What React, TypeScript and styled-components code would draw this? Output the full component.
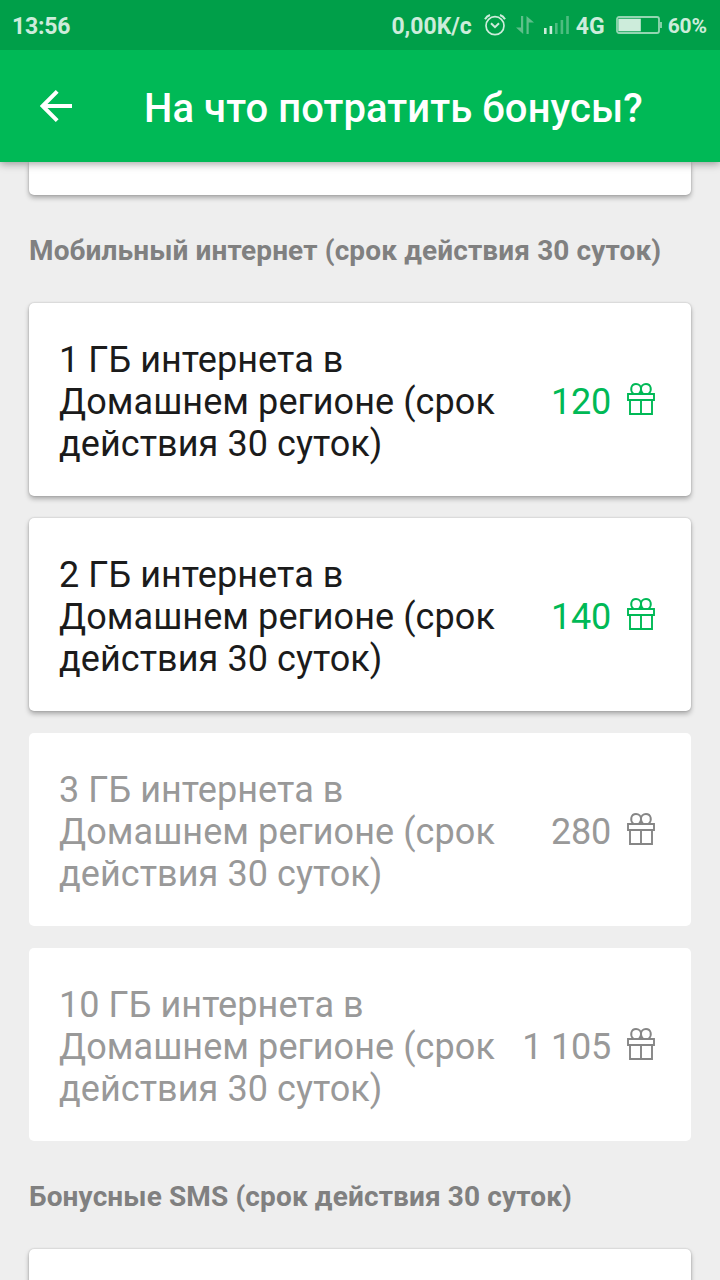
import React from "react";
import styled, { createGlobalStyle } from "styled-components";

const GlobalStyle = createGlobalStyle`
  *, *::before, *::after { box-sizing: border-box; }
  html, body { margin: 0; padding: 0; }
  body { background: #eeeeee; font-family: Roboto, "Liberation Sans", sans-serif; }
`;

const Screen = styled.div`
  width: 720px;
  height: 1280px;
  display: flex;
  flex-direction: column;
  overflow: hidden;
  background: #eeeeee;
`;

const TopArea = styled.div`
  flex: none;
  position: relative;
  z-index: 1;
  box-shadow: 0 2px 8px rgba(0, 0, 0, 0.36);
`;

const StatusBar = styled.div`
  height: 50px;
  padding: 2px 13px 0 12px;
  display: flex;
  align-items: center;
  justify-content: space-between;
  background: #009f49;
  color: #cdecdb;
`;

const StatusText = styled.span<{ $size?: number; $spacing?: number; $top?: number }>`
  margin-top: ${(p) => p.$top ?? 2}px;
  font-size: ${(p) => p.$size ?? 23}px;
  font-weight: 700;
  line-height: 28px;
  letter-spacing: ${(p) => p.$spacing ?? 0}px;
  white-space: nowrap;
`;

const StatusGroup = styled.div`
  height: 48px;
  display: flex;
  align-items: center;
`;

const StatusIcon = styled.svg<{ $left: number; $right: number }>`
  display: block;
  flex: none;
  margin: -2px ${(p) => p.$right}px 0 ${(p) => p.$left}px;
`;

const Header = styled.header`
  height: 112px;
  padding-left: 40px;
  display: flex;
  align-items: center;
  background: #00b956;
  color: #ffffff;
`;

const BackButton = styled.button`
  width: 32px;
  height: 32px;
  padding: 0;
  border: 0;
  background: none;
  color: inherit;
`;

const Title = styled.h1`
  margin: 6px 0 0 72px;
  font-size: 40px;
  font-weight: 500;
  line-height: 48px;
  letter-spacing: 0.08px;
  white-space: nowrap;
`;

const Content = styled.main`
  flex: 1;
  min-height: 0;
  padding: 0 29px;
  display: flex;
  flex-direction: column;
  overflow: hidden;
`;

const Card = styled.article<{ $disabled?: boolean }>`
  flex: none;
  height: 193px;
  padding: 36px 36px 31px 30px;
  display: flex;
  justify-content: space-between;
  border-radius: 5px;
  background: #ffffff;
  color: ${(p) => (p.$disabled ? "#999999" : "#1b1b1b")};
  box-shadow: ${(p) => (p.$disabled ? "none" : "0 3px 5px rgba(0,0,0,0.28), 0 0 2px rgba(0,0,0,0.22)")};
`;

const PreviousCard = styled(Card)`
  height: 33px;
  padding: 0;
  border-radius: 0 0 5px 5px;
`;

const CardList = styled.div`
  flex: none;
  display: flex;
  flex-direction: column;
  gap: 22px;
`;

const SectionTitle = styled.h2`
  flex: none;
  height: 108px;
  margin: 0;
  padding-top: 39px;
  font-size: 28px;
  font-weight: 700;
  line-height: 33px;
  letter-spacing: 0.13px;
  color: #808080;
  white-space: nowrap;
`;

const CardText = styled.p`
  margin: 0;
  font-size: 36px;
  line-height: 42px;
  letter-spacing: 0.07px;
  white-space: pre-line;
`;

const Price = styled.div<{ $disabled?: boolean }>`
  display: flex;
  align-items: center;
  gap: 16px;
  color: ${(p) => (p.$disabled ? "#999999" : "#00b956")};
  font-size: 36px;
  line-height: 42px;
  letter-spacing: -0.2px;
  white-space: nowrap;
`;

const GiftSvg = styled.svg<{ $disabled?: boolean }>`
  display: block;
  margin-top: -6px;
  color: ${(p) => (p.$disabled ? "#868686" : "#00b956")};
`;

const GiftIcon = ({ disabled }: { disabled?: boolean }) => (
  <GiftSvg $disabled={disabled} width="28" height="32" viewBox="0 0 28 32" fill="none" stroke="currentColor" strokeWidth="1.9">
    <path d="M1 11h26v6H1zM3 17h22v14H3zM14 17v14M14 11V5.5" />
    <path d="M6.3 10.6C2.6 7.3 4 1 9 1c3 0 5 2.1 5 4.9 0 2-.8 3.6-2 4.7M21.7 10.6C25.4 7.3 24 1 19 1c-3 0-5 2.1-5 4.9 0 2 .8 3.6 2 4.7" />
  </GiftSvg>
);

const offers = [
  { volume: "1 ГБ", price: "120", disabled: false },
  { volume: "2 ГБ", price: "140", disabled: false },
  { volume: "3 ГБ", price: "280", disabled: true },
  { volume: "10 ГБ", price: "1 105", disabled: true },
];

export default function App() {
  return (
    <>
      <GlobalStyle />
      <Screen>
        <TopArea>
          <StatusBar>
            <StatusText $spacing={-0.2}>13:56</StatusText>
            <StatusGroup>
              <StatusText>0,00K/c</StatusText>
              <StatusIcon $left={12} $right={10} width="22" height="22" viewBox="0 0 22 22" fill="none" stroke="currentColor" strokeWidth="1.7">
                <circle cx="11" cy="11.7" r="9" />
                <path d="M7 9.2l4 4 4-4" strokeWidth="2" />
                <path d="M1 5.2Q2.7 2.2 6 1M21 5.2Q19.3 2.2 16 1" strokeWidth="2" />
              </StatusIcon>
              <StatusIcon $left={0} $right={10} width="18" height="18" viewBox="0 0 18 18" fill="#5fbf8b">
                <path d="M5 0h2.2v18L0 11.5h5zM10.5 18h2.2V6.5H18L10.5 0z" />
              </StatusIcon>
              <StatusIcon $left={0} $right={7} width="25" height="18" viewBox="0 0 25 18" fill="currentColor">
                <path d="M0 12h2.6v6H0zM5.6 10h2.6v8H5.6z" />
                <path d="M11 7h2.6v11H11zM16.6 4h2.6v14h-2.6zM22.2 0h2.6v18h-2.6z" opacity=".38" />
              </StatusIcon>
              <StatusText>4G</StatusText>
              <StatusIcon $left={11} $right={6} width="46" height="18" viewBox="0 0 46 18" fill="none" stroke="currentColor">
                <rect x="1" y="1" width="42" height="16" rx="2" strokeWidth="1.8" opacity=".72" />
                <path d="M2.3 2.7h22.5v12.6H2.3z" fill="currentColor" stroke="none" />
                <path d="M45 6v6" strokeWidth="1.6" opacity=".8" />
              </StatusIcon>
              <StatusText $size={21} $spacing={-0.1} $top={0}>60%</StatusText>
            </StatusGroup>
          </StatusBar>
          <Header>
            <BackButton aria-label="Назад">
              <svg width="32" height="32" viewBox="0 0 32 32" fill="none" stroke="currentColor" strokeWidth="4">
                <path d="M32 16H3M17.2 1.4L2.6 16l14.6 14.6" />
              </svg>
            </BackButton>
            <Title>На что потратить бонусы?</Title>
          </Header>
        </TopArea>
        <Content>
          <PreviousCard />
          <SectionTitle>Мобильный интернет (срок действия 30 суток)</SectionTitle>
          <CardList>
            {offers.map((offer) => (
              <Card key={offer.volume} $disabled={offer.disabled}>
                <CardText>{`${offer.volume} интернета в\nДомашнем регионе (срок\nдействия 30 суток)`}</CardText>
                <Price $disabled={offer.disabled}>
                  <span>{offer.price}</span>
                  <GiftIcon disabled={offer.disabled} />
                </Price>
              </Card>
            ))}
          </CardList>
          <SectionTitle>Бонусные SMS (срок действия 30 суток)</SectionTitle>
          <Card />
        </Content>
      </Screen>
    </>
  );
}
